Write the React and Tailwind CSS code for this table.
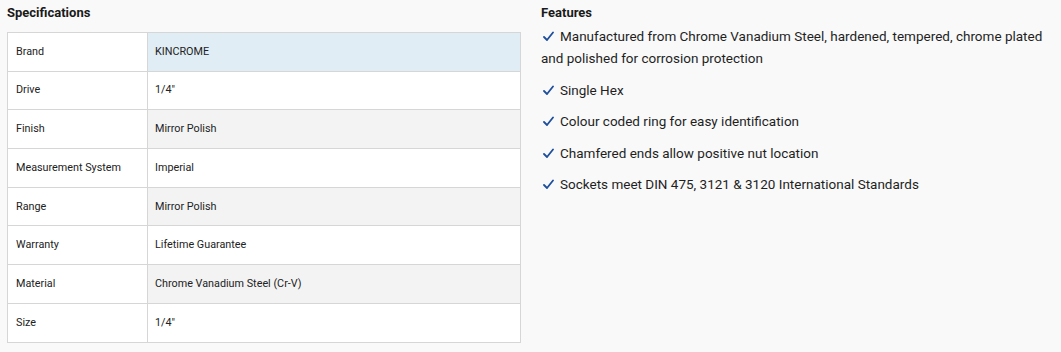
import React from "react";

const rows = [
  ["Brand", "KINCROME", "bg-[#e1edf4]"],
  ["Drive", "1/4\"", "bg-white"],
  ["Finish", "Mirror Polish", "bg-[#f3f3f3]"],
  ["Measurement System", "Imperial", "bg-white"],
  ["Range", "Mirror Polish", "bg-[#f3f3f3]"],
  ["Warranty", "Lifetime Guarantee", "bg-white"],
  ["Material", "Chrome Vanadium Steel (Cr-V)", "bg-[#f3f3f3]"],
  ["Size", "1/4\"", "bg-white"],
];

const features = [
  "Manufactured from Chrome Vanadium Steel, hardened, tempered, chrome plated and polished for corrosion protection",
  "Single Hex",
  "Colour coded ring for easy identification",
  "Chamfered ends allow positive nut location",
  "Sockets meet DIN 475, 3121 & 3120 International Standards",
];

function Check() {
  return (
    <svg width="11" height="11" viewBox="0 0 11 11" className="inline-block align-[-1px] ml-[2px] mr-[6px]">
      <path d="M1 6 L4 9 L10 1.5" fill="none" stroke="#1d4f9c" strokeWidth="1.8" strokeLinecap="round" strokeLinejoin="round" />
    </svg>
  );
}

export default function App() {
  return (
    <div
      className="w-[1061px] h-[352px] bg-[#f9f9f9] text-[#222] flex gap-[20px] pl-[7px] pt-[5px]"
      style={{ fontFamily: 'Roboto, "Noto Sans", sans-serif' }}
    >
      <div className="w-[514px] shrink-0">
        <h2 className="text-[13px] font-bold leading-[16px] h-[27px] text-[#1a1a1a]">Specifications</h2>
        <table className="w-full border-collapse text-[10.8px] text-[#222]">
          <tbody>
            {rows.map(([k, v, bg]) => (
              <tr key={k} className="h-[38.7px]">
                <td className="w-[140px] border border-[#d6d6d6] bg-white pl-[8px] align-middle">{k}</td>
                <td className={`border border-[#d6d6d6] pl-[7px] align-middle ${bg}`}>{v}</td>
              </tr>
            ))}
          </tbody>
        </table>
      </div>
      <div className="w-[512px] shrink-0">
        <h2 className="text-[13px] font-bold leading-[16px] h-[20px] text-[#1a1a1a]">Features</h2>
        <ul className="text-[13.5px] leading-[22px] text-[#1f1f1f]">
          {features.map((f) => (
            <li key={f} className="mb-[9.5px]">
              <Check />
              {f}
            </li>
          ))}
        </ul>
      </div>
    </div>
  );
}
